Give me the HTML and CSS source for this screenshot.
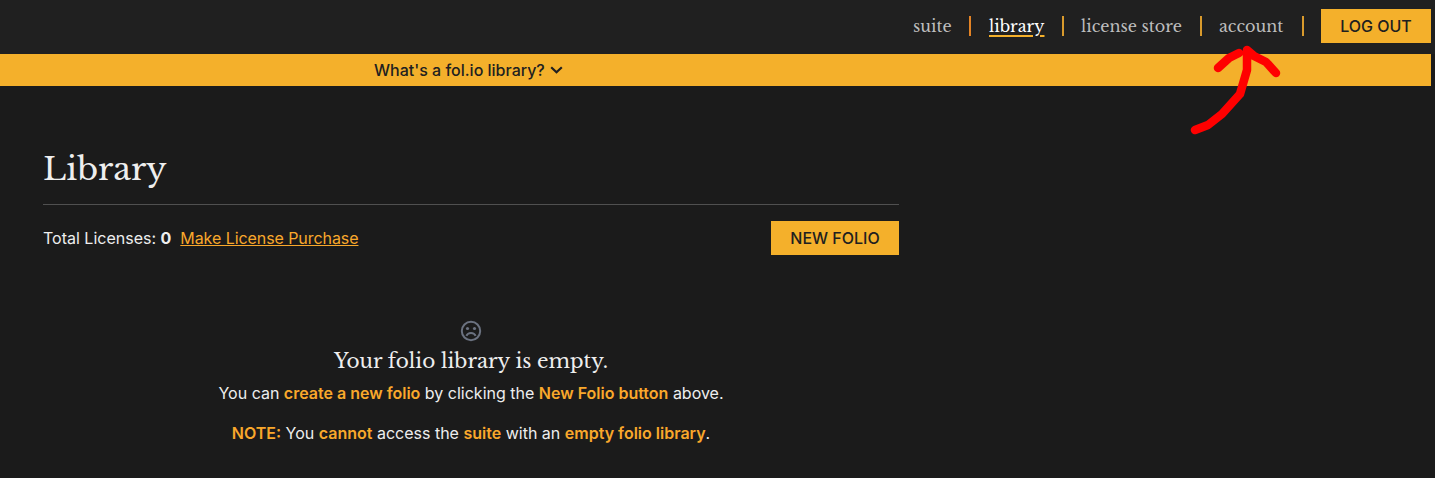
FILE: index.html
```html
<!DOCTYPE html>
<html lang="en">
<head>
<meta charset="utf-8">
<title>Library</title>
<link rel="stylesheet" href="styles.css">
</head>
<body>
<header class="topbar">
  <nav class="nav">
    <a class="link suite">suite</a><i class="sep warm"></i>
    <a class="link library active">library</a><i class="sep"></i>
    <a class="link store">license store</a><i class="sep"></i>
    <a class="link account">account</a><i class="sep"></i>
  </nav>
  <button class="button logout">LOG OUT</button>
</header>
<div class="banner">
  <span>What's a fol.io library?</span>
  <svg class="chevron" width="13" height="8" viewBox="0 0 13 8"><path d="M1.2 1.2 6.5 6.3 11.8 1.2" fill="none" stroke="#202020" stroke-width="2.2"/></svg>
</div>
<main class="content">
  <h1 class="title">Library</h1>
  <div class="toolbar">
    <p class="licenses">Total Licenses: <b>0</b><a class="purchase">Make License Purchase</a></p>
    <button class="button new">NEW FOLIO</button>
  </div>
  <section class="empty">
    <svg class="face" width="22" height="22" viewBox="0 0 22 22"><circle cx="11" cy="11" r="9.2" fill="none" stroke="#6b7280" stroke-width="2"/><circle cx="7.5" cy="8.5" r="1.6" fill="#6b7280"/><circle cx="14.5" cy="8.5" r="1.6" fill="#6b7280"/><path d="M6.4 15.9C8 12 14 12 15.6 15.9" fill="none" stroke="#6b7280" stroke-width="1.9"/></svg>
    <h2 class="subtitle">Your folio library is empty.</h2>
    <p class="line">You can <b>create a new folio</b> by clicking the <b>New Folio button</b> above.</p>
    <p class="line note"><b>NOTE:</b> You <b>cannot</b> access the <b>suite</b> with an <b>empty folio library</b>.</p>
  </section>
</main>
<svg class="arrow" width="100" height="100" viewBox="1185 40 100 100"><path d="M1195 130 1208 125 1222 114 1231 104 1240 94 1247 70 1247 50M1218 68 1229 58 1239 53M1247 50 1254 56 1266 62 1276 73" fill="none" stroke="#f00" stroke-width="8.5" stroke-linecap="round" stroke-linejoin="round"/></svg>
</body>
</html>
```
FILE: styles.css
```css
* { box-sizing: border-box; }
body { margin: 0; height: 478px; overflow: hidden; background: #1b1b1b; color: #eee; font: 16px/24px Inter, sans-serif; }
h1, h2, p { margin: 0; font-weight: 400; }
.topbar { height: 54px; padding: 9px 4px 0 0; background: #202020; display: flex; justify-content: flex-end; }
.nav { display: flex; height: 34px; align-items: center; }
.link { font: 16px/24px "Libre Baskerville", "Liberation Serif", serif; color: #bdbdbd; white-space: nowrap; }
.suite { width: 39px; }
.library { width: 56px; margin-left: 1px; }
.store { width: 102px; }
.account { width: 66px; }
.active { color: #fff; text-decoration: underline #f4b02b 2px; text-underline-offset: 3px; }
.sep { width: 2px; height: 20px; margin: 0 17px; background: #d99a2c; }
.warm { background: #e38325; }
.button { height: 34px; padding: 0; border: 0; background: #f4b02b; color: #202020; font: 500 16px/34px Inter, sans-serif; }
.logout { width: 110px; }
.new { width: 128px; }
.banner { height: 32px; margin-right: 4px; padding-left: 374px; background: #f4b02b; color: #202020; display: flex; align-items: center; gap: 5px; font-weight: 500; }
.content { width: 856px; margin-left: 43px; }
.title { height: 119px; padding-top: 61px; border-bottom: 1px solid #505050; font: 32px/44px "Libre Baskerville", "Liberation Serif", serif; }
.toolbar { display: flex; justify-content: space-between; align-items: center; margin-top: 16px; }
.purchase { margin-left: 9px; color: #f9a82b; text-decoration: underline; letter-spacing: -0.07px; }
.empty { display: flex; flex-direction: column; align-items: center; padding-top: 65px; }
.subtitle { margin-top: 4px; font: 20px/30px "Libre Baskerville", "Liberation Serif", serif; }
.line { margin-top: 5px; }
.line b { color: #f9a82b; font-weight: 600; }
.note { margin-top: 16px; }
.arrow { position: absolute; left: 1185px; top: 40px; }
```
